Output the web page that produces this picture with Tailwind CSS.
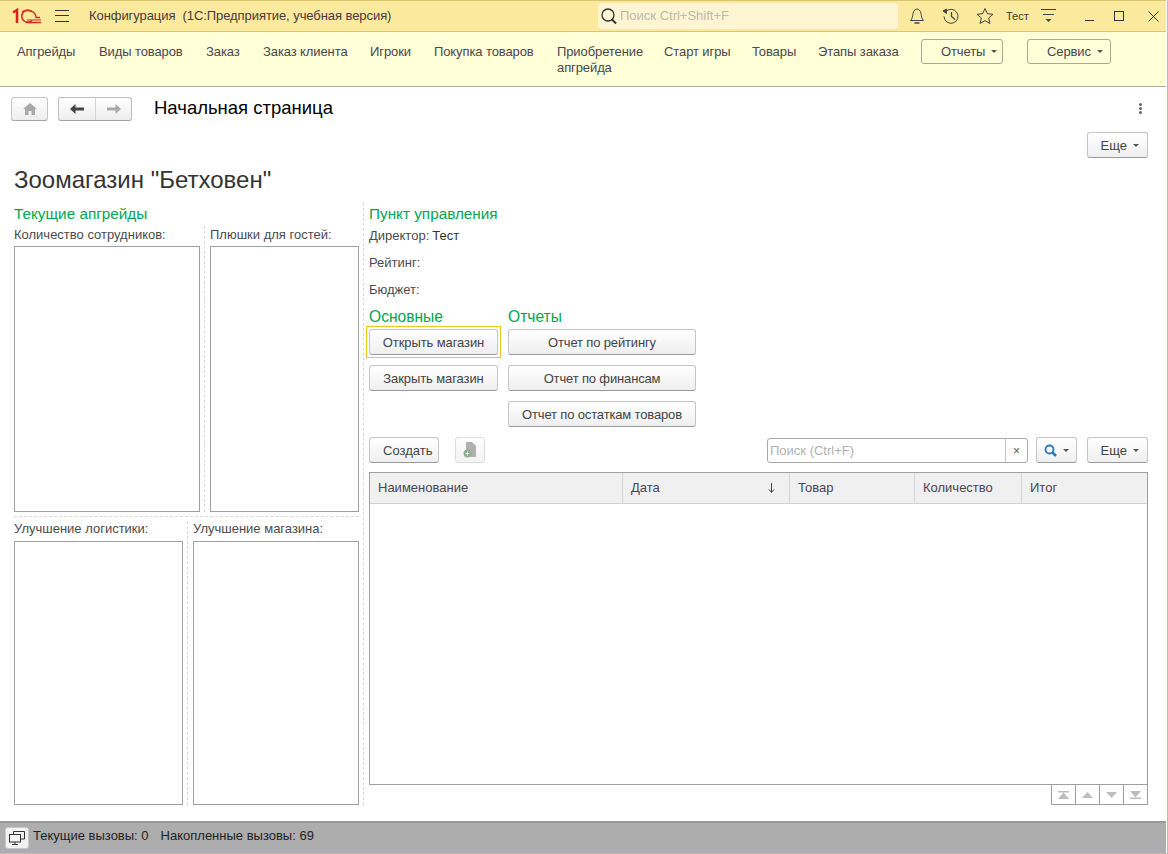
<!DOCTYPE html>
<html lang="ru">
<head>
<meta charset="UTF-8">
<title>Конфигурация</title>
<script src="https://cdn.jsdelivr.net/npm/@tailwindcss/browser@4"></script>
</head>
<body class="bg-white">
<div class="w-[1168px] h-[854px] overflow-hidden flex flex-col pr-[1px] border-r border-b border-[#c9c27f] font-['Liberation_Sans',Arial,sans-serif] text-[13px] text-[#4b4b4b]">

  <!-- title bar -->
  <div class="h-[32px] shrink-0 bg-[#fbe99d] border-t border-b border-[#d9c66e] flex items-center">
    <svg class="ml-[12px] w-[30px] h-[16px]" viewBox="0 0 30 16" fill="none" stroke="#d8241f"><path d="M1 4.500 L5 2 V15" stroke-width="2.500"/><path d="M20 4 A6 6 0 1 0 20 12.500" stroke-width="1.500"/><path d="M10 4 A8.500 7.500 0 0 1 24 9.500 H28" stroke-width="1.300"/><path d="M15 12 H29" stroke-width="1"/><path d="M14 14.500 H29" stroke-width="1.500"/></svg>
    <svg class="ml-[13px] w-[14px] h-[12px]" viewBox="0 0 14 12" stroke="#333"><path d="M0 .500H14M0 5.500H14M0 11.500H14"/></svg>
    <span class="ml-[20px] w-[303px] text-[#4a3a3a] tracking-[-0.07px] whitespace-pre">Конфигурация  (1С:Предприятие, учебная версия)</span>
    <div class="ml-[206px] w-[300px] h-[26px] rounded-[3px] bg-[#fdf5d2] flex items-center">
      <svg class="ml-[2px] w-[18px] h-[18px]" viewBox="0 0 18 18" fill="none" stroke="#333"><circle cx="8" cy="8" r="6" stroke-width="1.300"/><path d="M12 12.500 L16 16.500" stroke-width="2"/></svg>
      <span class="ml-[2px] text-[#b9b9b0]">Поиск Ctrl+Shift+F</span>
    </div>
    <svg class="ml-[10px] w-[18px] h-[18px]" viewBox="0 0 18 18" fill="none" stroke="#444"><path d="M2.500 13.500 C4.500 11.500 4.500 9.500 5 6.500 C5.500 3.500 7.500 2 9 2 C10.500 2 12.500 3.500 13 6.500 C13.500 9.500 13.500 11.500 15.500 13.500 Z"/><path d="M6.500 16 H11.500" stroke-width="1.500"/></svg>
    <svg class="ml-[16px] w-[18px] h-[18px]" viewBox="0 0 18 18" fill="none" stroke="#444"><path d="M3.500 5 A7 7 0 1 1 2 9.500"/><path d="M1 4 L4.500 2 V6.500 Z" fill="#444"/><path d="M9.500 5 V9.500 L13 12.500" stroke-width="1.300"/></svg>
    <svg class="ml-[16px] w-[18px] h-[18px]" viewBox="0 0 18 18" fill="none" stroke="#444"><path d="M9 1.500 L11.300 6.700 L17 7.300 L12.700 11 L14 16.500 L9 13.600 L4 16.500 L5.300 11 L1 7.300 L6.700 6.700 Z"/></svg>
    <span class="ml-[12px] w-[22px] text-[11px] text-[#3a3a3a]">Тест</span>
    <svg class="ml-[13px] w-[15px] h-[14px]" viewBox="0 0 15 14" stroke="#444" fill="none"><path d="M0 .500H15M2 5.500H13"/><path d="M4.500 10H10.500L7.500 13Z" fill="#444" stroke="none"/></svg>
    <svg class="ml-[29px] w-[11px] h-[10px]" viewBox="0 0 11 10" stroke="#333"><path d="M0 9.500H9"/></svg>
    <svg class="ml-[18px] w-[10px] h-[10px]" viewBox="0 0 10 10" fill="none" stroke="#333"><rect x=".5" y=".5" width="9" height="9"/></svg>
    <svg class="ml-[24px] w-[11px] h-[11px]" viewBox="0 0 11 11" stroke="#333"><path d="M.5 .5L10.500 10.500M10.500 .5L.5 10.500"/></svg>
  </div>

  <!-- sections panel -->
  <div class="h-[55px] shrink-0 bg-[#ffffd8] border-b border-[#a9a9a9] flex items-start gap-[23px] pl-[17px] pt-[12px] text-[#4b4550] leading-[16px] tracking-[-0.1px] whitespace-nowrap">
    <span class="w-[59px]">Апгрейды</span>
    <span class="w-[84px]">Виды товаров</span>
    <span class="w-[34px]">Заказ</span>
    <span class="w-[84px]">Заказ клиента</span>
    <span class="w-[41px]">Игроки</span>
    <span class="w-[100px]">Покупка товаров</span>
    <span class="w-[84px]">Приобретение<br>апгрейда</span>
    <span class="w-[65px]">Старт игры</span>
    <span class="w-[43px]">Товары</span>
    <span class="w-[80px]">Этапы заказа</span>
    <span class="-mt-[5px] w-[82px] h-[25px] border border-[#a9a99a] rounded-[3px] flex items-center pl-[19px] gap-[6px]">Отчеты <i class="border-x-[3px] border-t-[3px] border-x-transparent border-t-[#555]"></i></span>
    <span class="-mt-[5px] ml-[1px] w-[84px] h-[25px] border border-[#a9a99a] rounded-[3px] flex items-center pl-[19px] gap-[6px]">Сервис <i class="border-x-[3px] border-t-[3px] border-x-transparent border-t-[#555]"></i></span>
  </div>

  <!-- page header -->
  <div class="h-[43px] shrink-0 flex items-center pl-[11px]">
    <div class="w-[37px] h-[24px] rounded-[3px] border border-[#c6c6c6] border-b-[#a5a5a5] bg-gradient-to-b from-white to-[#ededed] flex items-center justify-center">
      <svg class="w-[14px] h-[12px]" viewBox="0 0 14 12" fill="#a9a9a9"><path d="M7 0 L14 6 H12 V12 H8.500 V8 H5.500 V12 H2 V6 H0 Z"/></svg>
    </div>
    <div class="ml-[10px] w-[74px] h-[24px] rounded-[3px] border border-[#bdbdbd] border-b-[#a0a0a0] bg-gradient-to-b from-white to-[#ededed] flex">
      <div class="w-[37px] border-r border-[#d5d5d5] flex items-center justify-center">
        <svg class="w-[14px] h-[10px]" viewBox="0 0 14 10" fill="#444"><path d="M5.500 0 V3.500 H14 V6.500 H5.500 V10 L0 5 Z"/></svg>
      </div>
      <div class="flex-1 flex items-center justify-center">
        <svg class="w-[14px] h-[10px]" viewBox="0 0 14 10" fill="#a9a9a9"><path d="M8.500 0 V3.500 H0 V6.500 H8.500 V10 L14 5 Z"/></svg>
      </div>
    </div>
    <span class="ml-[22px] pb-[2px] text-[18.5px] text-black">Начальная страница</span>
    <div class="ml-auto mr-[24px] flex flex-col gap-[1px]">
      <i class="w-[3px] h-[3px] rounded-full bg-[#666]"></i>
      <i class="w-[3px] h-[3px] rounded-full bg-[#666]"></i>
      <i class="w-[3px] h-[3px] rounded-full bg-[#666]"></i>
    </div>
  </div>

  <!-- content -->
  <div class="flex-1 min-h-0 flex flex-col">
    <div class="h-[27px] shrink-0 flex justify-end pr-[18px] pt-[2px]">
      <button class="w-[61px] h-[26px] pt-[1px] rounded-[3px] border border-[#c6c6c6] border-b-[#9a9a9a] bg-gradient-to-b from-white to-[#efefef] flex items-center justify-end gap-[6px] pr-[8px] text-[#444]">Еще <i class="border-x-[3px] border-t-[3px] border-x-transparent border-t-[#555]"></i></button>
    </div>
    <div class="h-[36px] shrink-0 pl-[14px] pt-[9px] text-[24px] leading-[28px] text-[#333]">Зоомагазин "Бетховен"</div>

    <div class="flex pl-[14px] h-[612px] pt-[12px]">
      <!-- left group -->
      <div class="w-[345px] shrink-0 flex flex-col">
        <div class="h-[21px] text-[15.3px] leading-[18px] text-[#00a650]">Текущие апгрейды</div>
        <div class="flex h-[286px]">
          <div class="w-[186px] flex flex-col">
            <div class="h-[20px] leading-[18px]">Количество сотрудников:</div>
            <div class="flex-1 border border-[#a0a0a0]"></div>
          </div>
          <div class="mx-[4px] w-[2px] border-l border-dashed border-[#d8d8d8]"></div>
          <div class="flex-1 flex flex-col">
            <div class="h-[20px] leading-[18px]">Плюшки для гостей:</div>
            <div class="flex-1 border border-[#a0a0a0]"></div>
          </div>
        </div>
        <div class="my-[4px] h-0 border-t border-dashed border-[#d8d8d8]"></div>
        <div class="flex h-[284px]">
          <div class="w-[169px] flex flex-col">
            <div class="h-[20px] leading-[16px]">Улучшение логистики:</div>
            <div class="flex-1 border border-[#a0a0a0]"></div>
          </div>
          <div class="mx-[4px] w-[2px] border-l border-dashed border-[#d8d8d8]"></div>
          <div class="flex-1 flex flex-col">
            <div class="h-[20px] leading-[16px]">Улучшение магазина:</div>
            <div class="flex-1 border border-[#a0a0a0]"></div>
          </div>
        </div>
      </div>

      <div class="mx-[4px] -mt-[2px] w-[2px] border-l border-dashed border-[#d8d8d8]"></div>

      <!-- right group -->
      <div class="w-[779px] shrink-0 flex flex-col">
        <div class="h-[21px] text-[15.3px] leading-[18px] text-[#00a650]">Пункт управления</div>
        <div class="h-[25px] flex">Директор:<span class="ml-[3px] text-[#333]">Тест</span></div>
        <div class="h-[27px] pt-[2px]">Рейтинг:</div>
        <div class="h-[18px] pt-[2px]">Бюджет:</div>
        <div class="flex mt-[11px] gap-[10px]">
          <div class="w-[129px] flex flex-col">
            <div class="h-[22px] text-[15.6px] leading-[20px] text-[#00a650]">Основные</div>
            <button class="relative h-[26px] pt-[1px] rounded-[3px] border border-[#c6c6c6] border-b-[#9a9a9a] bg-gradient-to-b from-white to-[#efefef] text-[#444] tracking-[-0.1px] after:absolute after:-inset-[4px] after:border after:border-[#f5c518]">Открыть магазин</button>
            <button class="mt-[10px] h-[26px] pt-[1px] rounded-[3px] border border-[#c6c6c6] border-b-[#9a9a9a] bg-gradient-to-b from-white to-[#efefef] text-[#444] tracking-[-0.1px]">Закрыть магазин</button>
          </div>
          <div class="w-[188px] flex flex-col">
            <div class="h-[22px] text-[15.6px] leading-[20px] text-[#00a650]">Отчеты</div>
            <button class="h-[26px] pt-[1px] rounded-[3px] border border-[#c6c6c6] border-b-[#9a9a9a] bg-gradient-to-b from-white to-[#efefef] text-[#444] tracking-[-0.15px]">Отчет по рейтингу</button>
            <button class="mt-[10px] h-[26px] pt-[1px] rounded-[3px] border border-[#c6c6c6] border-b-[#9a9a9a] bg-gradient-to-b from-white to-[#efefef] text-[#444] tracking-[-0.15px]">Отчет по финансам</button>
            <button class="mt-[10px] h-[26px] pt-[1px] rounded-[3px] border border-[#c6c6c6] border-b-[#9a9a9a] bg-gradient-to-b from-white to-[#efefef] text-[#444] tracking-[-0.15px]">Отчет по остаткам товаров</button>
          </div>
        </div>

        <!-- command bar -->
        <div class="mt-[10px] h-[26px] shrink-0 flex items-start">
          <button class="w-[70px] h-[26px] pl-[13px] pt-[1px] text-left rounded-[3px] border border-[#c6c6c6] border-b-[#9a9a9a] bg-gradient-to-b from-white to-[#efefef] text-[#444]">Создать</button>
          <button class="ml-[16px] w-[30px] h-[26px] rounded-[3px] border border-[#dcdcdc] bg-gradient-to-b from-white to-[#f3f3f3] flex items-center justify-center">
            <svg class="w-[14px] h-[16px]" viewBox="0 0 14 16"><path d="M3 0 H9 L13 4 V15 H3 Z" fill="#b0b0b0"/><circle cx="4.500" cy="11.500" r="4" fill="#8fb08f"/><path d="M2.500 11.500H6.500M4.500 9.500V13.500" stroke="#e8f0e8"/></svg>
          </button>
          <div class="ml-[282px] mt-[1px] w-[261px] h-[25px] rounded-[3px] border border-[#a9a9a9] flex items-center text-[#b0b0b0] pl-[2px]">
            <span class="flex-1">Поиск (Ctrl+F)</span>
            <span class="w-[22px] h-full border-l border-[#c6c6c6] flex items-center justify-center text-[#555] text-[12px]">×</span>
          </div>
          <button class="ml-[8px] w-[41px] h-[26px] rounded-[3px] border border-[#c6c6c6] border-b-[#9a9a9a] bg-gradient-to-b from-white to-[#efefef] flex items-center justify-center gap-[6px]">
            <svg class="w-[13px] h-[13px]" viewBox="0 0 13 13" fill="none" stroke="#2a78b5"><circle cx="5.500" cy="5.500" r="4" stroke-width="1.800"/><path d="M8.500 8.500L12 12" stroke-width="2.500"/></svg>
            <i class="border-x-[3px] border-t-[3px] border-x-transparent border-t-[#555]"></i>
          </button>
          <button class="ml-[10px] w-[61px] h-[26px] pt-[1px] rounded-[3px] border border-[#c6c6c6] border-b-[#9a9a9a] bg-gradient-to-b from-white to-[#efefef] flex items-center justify-end gap-[6px] pr-[8px] text-[#444]">Еще <i class="border-x-[3px] border-t-[3px] border-x-transparent border-t-[#555]"></i></button>
        </div>

        <!-- table -->
        <div class="mt-[9px] h-[313px] shrink-0 border border-[#a0a0a0] flex flex-col">
          <div class="h-[31px] shrink-0 bg-[#f0f0f0] border-b border-[#d0d0d0] flex items-center text-[#4b4550]">
            <div class="w-[253px] h-full pl-[8px] border-r border-[#d6d6d6] flex items-center">Наименование</div>
            <div class="w-[167px] h-full pl-[8px] pr-[14px] border-r border-[#d6d6d6] flex items-center justify-between">Дата
              <svg class="w-[7px] h-[10px]" viewBox="0 0 7 10" fill="none" stroke="#444"><path d="M3.500 0V9M1 6.500L3.500 9.500L6 6.500"/></svg>
            </div>
            <div class="w-[125px] h-full pl-[8px] border-r border-[#d6d6d6] flex items-center">Товар</div>
            <div class="w-[107px] h-full pl-[8px] border-r border-[#d6d6d6] flex items-center">Количество</div>
            <div class="flex-1 h-full pl-[8px] flex items-center">Итог</div>
          </div>
        </div>
        <!-- pager -->
        <div class="flex justify-end h-[20px] -mt-[1px]">
          <div class="w-[97px] h-[21px] border border-[#a0a0a0] flex">
            <div class="flex-1 border-r border-[#a0a0a0] flex items-center justify-center">
              <svg class="w-[11px] h-[8px]" viewBox="0 0 11 8" fill="#bdbdbd"><path d="M0 0H11V1.500H0ZM5.500 1.500L11 8H0Z"/></svg>
            </div>
            <div class="flex-1 border-r border-[#a0a0a0] flex items-center justify-center">
              <svg class="w-[11px] h-[6px]" viewBox="0 0 11 6" fill="#bdbdbd"><path d="M5.500 0L11 6H0Z"/></svg>
            </div>
            <div class="flex-1 border-r border-[#a0a0a0] flex items-center justify-center">
              <svg class="w-[11px] h-[6px]" viewBox="0 0 11 6" fill="#bdbdbd"><path d="M0 0H11L5.500 6Z"/></svg>
            </div>
            <div class="flex-1 flex items-center justify-center">
              <svg class="w-[11px] h-[8px]" viewBox="0 0 11 8" fill="#bdbdbd"><path d="M0 0H11L5.500 6.500ZM0 6.500H11V8H0Z"/></svg>
            </div>
          </div>
        </div>
      </div>
    </div>
  </div>

  <!-- status bar -->
  <div class="h-[32px] shrink-0 bg-[#adadad] border-t-2 border-[#999] flex items-center pl-[5px] text-[#222]">
    <div class="w-[24px] h-[22px] rounded-[3px] bg-[#f3f3f3] border border-[#c8c8c8] flex items-center justify-center">
      <svg class="w-[16px] h-[14px]" viewBox="0 0 16 14" fill="none" stroke="#333"><path d="M4.500 3V.5H15.500V8H12"/><rect x=".5" y="3.500" width="11" height="7.500"/><path d="M6 11V13M3 13.500H9"/></svg>
    </div>
    <span class="ml-[4px] pb-[4px]">Текущие вызовы: 0</span>
    <span class="ml-[12px] pb-[4px]">Накопленные вызовы: 69</span>
  </div>
</div>
</body>
</html>
